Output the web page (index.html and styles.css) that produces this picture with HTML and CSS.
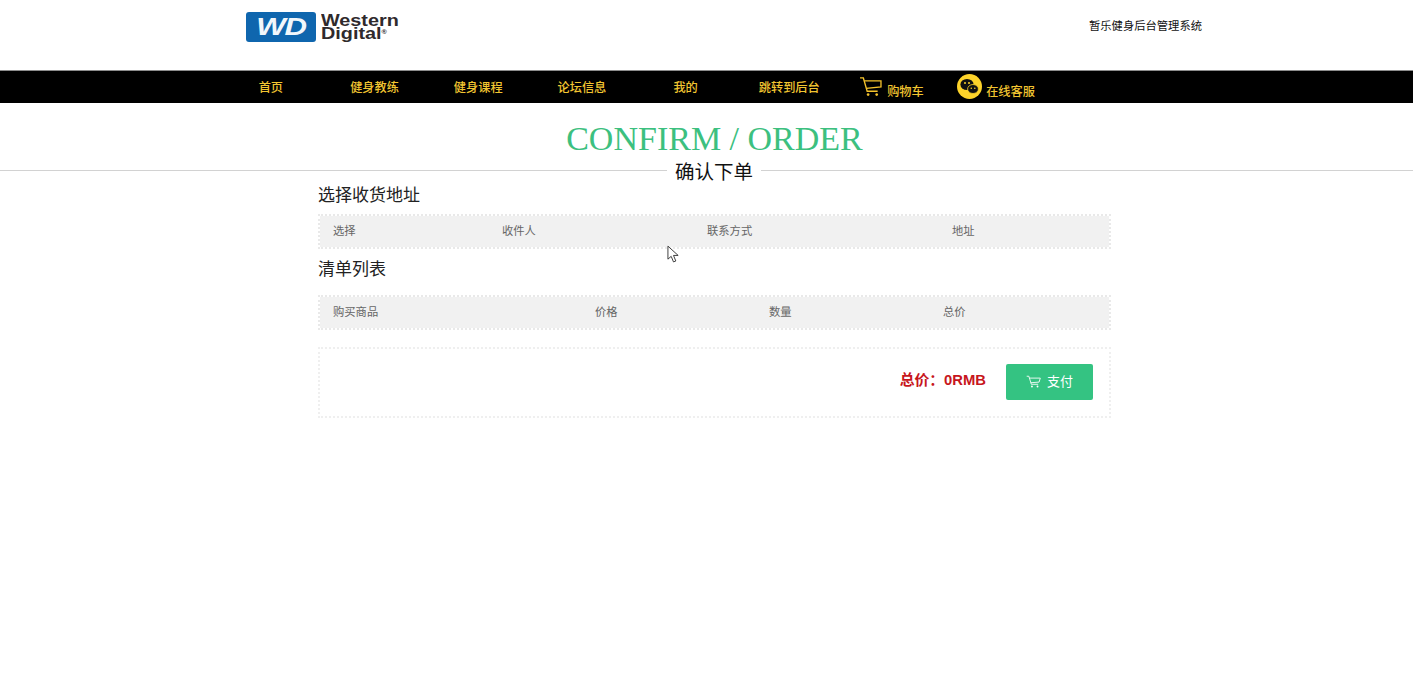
FILE: index.html
```html
<!DOCTYPE html>
<html lang="zh-CN">
<head>
<meta charset="utf-8">
<title>确认下单</title>
<link rel="stylesheet" href="styles.css">
</head>
<body>
<header class="top">
  <div class="logo">
    <div class="logo-badge"><span>WD</span></div>
    <div class="logo-name">Western<br>Digital<sup>®</sup></div>
  </div>
  <div class="site-name">暂乐健身后台管理系统</div>
</header>
<nav class="nav">
  <a class="nav-item">首页</a>
  <a class="nav-item">健身教练</a>
  <a class="nav-item">健身课程</a>
  <a class="nav-item">论坛信息</a>
  <a class="nav-item">我的</a>
  <a class="nav-item">跳转到后台</a>
  <a class="nav-cart">
    <svg class="cart-icon" viewBox="0 0 24 21" fill="none" stroke="#f5c32c" stroke-width="1.4">
      <path d="M1 1h3.5l4 14h11"/>
      <path d="M5.5 4H23v6.5L7.5 12"/>
      <circle cx="9.5" cy="18.5" r="1.4" fill="#f5c32c" stroke="none"/>
      <circle cx="18.5" cy="18.5" r="1.4" fill="#f5c32c" stroke="none"/>
    </svg>
    <span>购物车</span>
  </a>
  <a class="nav-service">
    <svg class="wechat-icon" viewBox="0 0 25 25">
      <circle cx="12.5" cy="12.5" r="12.5" fill="#fdd32a"/>
      <ellipse cx="10" cy="10.5" rx="6.6" ry="5.6" fill="#111"/>
      <ellipse cx="16" cy="15" rx="5.4" ry="4.5" fill="#111" stroke="#fdd32a" stroke-width="0.8"/>
      <circle cx="8" cy="9" r="1" fill="#fdd32a"/>
      <circle cx="12" cy="9" r="1" fill="#fdd32a"/>
      <circle cx="14.3" cy="14.2" r="0.8" fill="#fdd32a"/>
      <circle cx="17.8" cy="14.2" r="0.8" fill="#fdd32a"/>
    </svg>
    <span>在线客服</span>
  </a>
</nav>
<section class="title">
  <h1>CONFIRM / ORDER</h1>
  <div class="subtitle"><span>确认下单</span></div>
</section>
<main class="content">
  <h2 class="section-head">选择收货地址</h2>
  <div class="table-head address-cols">
    <span>选择</span><span>收件人</span><span>联系方式</span><span>地址</span>
  </div>
  <h2 class="section-head list-head">清单列表</h2>
  <div class="table-head list-cols">
    <span>购买商品</span><span>价格</span><span>数量</span><span>总价</span>
  </div>
  <div class="summary">
    <div class="total">总价：0RMB</div>
    <button class="pay">
      <svg class="pay-icon" viewBox="0 0 24 21" fill="none" stroke="#fff" stroke-width="1.4">
        <path d="M1 2h3.5l4 13h11"/>
        <path d="M5.5 5H23l-2 6.5L7.5 12.5"/>
        <circle cx="9.5" cy="18.5" r="1.5" fill="#fff" stroke="none"/>
        <circle cx="18.5" cy="18.5" r="1.5" fill="#fff" stroke="none"/>
      </svg>
      <span>支付</span>
    </button>
  </div>
</main>
<svg class="pointer" viewBox="0 0 14 20" fill="#fff" stroke="#333" stroke-width="1">
  <path d="M1 1v14l3.5-3 2.5 6 2.5-1-2.5-6h5z"/>
</svg>
</body>
</html>
```
FILE: styles.css
```css
* { box-sizing: border-box; }
html, body { margin: 0; height: 100%; }
body {
  position: relative;
  overflow: hidden;
  background: #fff;
  color: #111;
  font-family: "Liberation Sans", "Noto Sans CJK SC", sans-serif;
}
.top {
  height: 70px;
  padding: 12px 211px 0 246px;
  display: flex;
  justify-content: space-between;
  align-items: flex-start;
}
.logo { display: flex; gap: 5px; }
.logo-badge {
  width: 70px;
  height: 30px;
  border-radius: 3px;
  background: #0f66ae;
  display: flex;
  align-items: center;
  justify-content: center;
}
.logo-badge span {
  color: #f2f7fb;
  font: italic bold 24px/1 "Liberation Sans", sans-serif;
  letter-spacing: -1px;
  transform: scaleX(1.3);
}
.logo-name {
  margin-top: 2px;
  color: #2f2a2c;
  font: bold 16.5px/13px "Liberation Sans", sans-serif;
  transform: scaleX(1.2);
  transform-origin: left center;
}
.logo-name sup { font-size: 6px; line-height: 0; vertical-align: 5px; }
.site-name { margin-top: 7px; font-size: 11.3px; line-height: 15px; color: #111; }
.nav {
  height: 33px;
  padding-left: 219px;
  display: flex;
  background: #000;
  border-top: 1px solid #8c8c8c;
  color: #f2c531;
  font-size: 12.2px;
  font-weight: 500;
}
.nav-item { width: 103.7px; line-height: 34px; text-align: center; }
.nav-cart, .nav-service { display: flex; align-items: flex-start; }
.nav-cart { width: 98px; margin-left: 18px; padding-top: 6px; }
.nav-cart span { margin: 8px 0 0 5px; line-height: 15px; }
.cart-icon { width: 23px; height: 20px; }
.nav-service { padding-top: 3px; }
.nav-service span { margin: 10px 0 0 4px; line-height: 16px; }
.wechat-icon { width: 25px; height: 25px; }
.title { text-align: center; }
.title h1 {
  margin: 0;
  padding: 16px 0 0 16px;
  height: 67px;
  color: #3cc07f;
  font: normal 34px/39px "Liberation Serif", serif;
}
.subtitle {
  height: 17px;
  padding-left: 15px;
  border-top: 1px solid #d2d2d2;
}
.subtitle span {
  display: inline-block;
  vertical-align: top;
  height: 24px;
  margin-top: -11px;
  padding: 0 8px;
  background: #fff;
  color: #111;
  font-size: 19.5px;
  line-height: 24px;
}
.content { width: 793px; margin-left: 318px; }
.section-head {
  margin: 0;
  height: 27px;
  color: #222;
  font-size: 17px;
  font-weight: normal;
  line-height: 18px;
}
.list-head { height: 35px; margin-top: 11px; padding-top: 1px; }
.table-head {
  display: grid;
  height: 35px;
  padding: 0 0 3px 13px;
  align-items: center;
  background: #f1f1f1;
  background-clip: padding-box;
  border: 2px dotted #e9e9e9;
  color: #666;
  font-size: 11.3px;
}
.address-cols { grid-template-columns: 169px 205px 245px 1fr; }
.list-cols { grid-template-columns: 262px 174px 174px 1fr; }
.summary {
  height: 71px;
  margin-top: 17px;
  padding-right: 16px;
  display: flex;
  justify-content: flex-end;
  align-items: center;
  gap: 20px;
  border: 2px dotted #efefef;
}
.total { color: #c7161c; font-size: 14.8px; font-weight: bold; margin-top: -8px; }
.pay {
  width: 87px;
  height: 36px;
  padding: 0 0 2px 0;
  display: flex;
  align-items: center;
  justify-content: center;
  gap: 6px;
  border: 0;
  border-radius: 2px;
  background: #34c382;
  color: #fff;
  font-family: inherit;
  font-size: 13px;
  margin-top: -2px;
}
.pay-icon { width: 15px; height: 13px; margin-top: 2px; }
.pointer { position: absolute; left: 667px; top: 245px; width: 13px; height: 19px; }
```
